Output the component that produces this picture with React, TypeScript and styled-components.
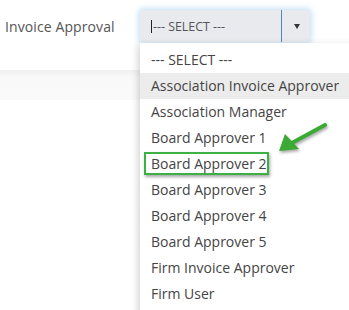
import * as React from "react";
import styled, { createGlobalStyle } from "styled-components";

const Global = createGlobalStyle`
  body {
    margin: 0;
    background: #fff;
    font-family: "Open Sans", "Noto Sans", sans-serif;
    overflow: hidden;
  }
`;

const Page = styled.div`
  position: relative;
  width: 349px;
  height: 310px;
  overflow: hidden;
`;

const FormRow = styled.div`
  display: flex;
  align-items: center;
  height: 70px;
  padding: 0 0 18px 5px;
  box-sizing: border-box;
`;

const Band = styled.div`
  height: 30px;
  background: linear-gradient(#f0f0f0, #f9f9f9 25%, #fafafa);
`;

const Label = styled.label`
  width: 135px;
  font-size: 14px;
  color: #555;
  letter-spacing: 0.1px;
`;

const SelectWrap = styled.div`
  position: relative;
  width: 170px;
  height: 32px;
`;

const SelectBox = styled.div`
  display: flex;
  height: 100%;
  background: #e8eaee;
  border-radius: 3px;
  box-shadow: 0 0 6px 1px rgba(102, 175, 233, 0.45);
`;

const SelectValue = styled.div`
  flex: 1;
  display: flex;
  align-items: center;
  padding-left: 11px;
  font-size: 12.4px;
  color: #555;
`;

const Caret = styled.span`
  display: inline-block;
  width: 1px;
  height: 13px;
  background: #222;
  margin-right: 1px;
`;

const ArrowButton = styled.div`
  width: 28px;
  display: flex;
  align-items: center;
  justify-content: center;
  border-left: 1px solid #4f86c6;
`;

const Triangle = styled.span`
  width: 0;
  height: 0;
  border-left: 3.5px solid transparent;
  border-right: 3.5px solid transparent;
  border-top: 5px solid #333;
  margin-left: 1px;
`;

const Menu = styled.ul`
  position: absolute;
  top: 43px;
  left: 140px;
  width: 230px;
  height: 300px;
  margin: 0;
  padding: 4px 0 0;
  list-style: none;
  background: #fff;
  box-shadow: -2px 2px 7px rgba(0, 0, 0, 0.18);
`;

const Item = styled.li<{ active?: boolean }>`
  height: 26px;
  line-height: 26px;
  padding-left: 11px;
  font-size: 14px;
  color: #444;
  white-space: nowrap;
  background: ${(p) => (p.active ? "#ececec" : "transparent")};
`;

const Highlight = styled.div`
  position: absolute;
  left: 144px;
  top: 152px;
  width: 125px;
  height: 23px;
  box-sizing: border-box;
  border: 2.5px solid #3cb043;
  box-shadow: 1px 2px 3px rgba(0, 0, 0, 0.35);
`;

const Pointer = styled.svg`
  position: absolute;
  left: 272px;
  top: 118px;
  overflow: visible;
  filter: drop-shadow(1px 2px 1.5px rgba(0, 0, 0, 0.35));
`;

const options = [
  "--- SELECT ---",
  "Association Invoice Approver",
  "Association Manager",
  "Board Approver 1",
  "Board Approver 2",
  "Board Approver 3",
  "Board Approver 4",
  "Board Approver 5",
  "Firm Invoice Approver",
  "Firm User",
];

export default function App() {
  return (
    <Page>
      <Global />
      <FormRow>
        <Label>Invoice Approval</Label>
        <SelectWrap>
          <SelectBox>
            <SelectValue>
              <Caret />
              --- SELECT ---
            </SelectValue>
            <ArrowButton>
              <Triangle />
            </ArrowButton>
          </SelectBox>
        </SelectWrap>
      </FormRow>
      <Band />
      <Menu>
        {options.map((o, i) => (
          <Item key={o} active={i === 1}>
            {o}
          </Item>
        ))}
      </Menu>
      <Highlight />
      <Pointer width="60" height="40" viewBox="0 0 60 40">
        <line x1="53" y1="7" x2="18" y2="26" stroke="#3aaa35" strokeWidth="4" strokeLinecap="round" />
        <polygon points="7,33 13,16 27,31" fill="#3aaa35" />
      </Pointer>
    </Page>
  );
}
